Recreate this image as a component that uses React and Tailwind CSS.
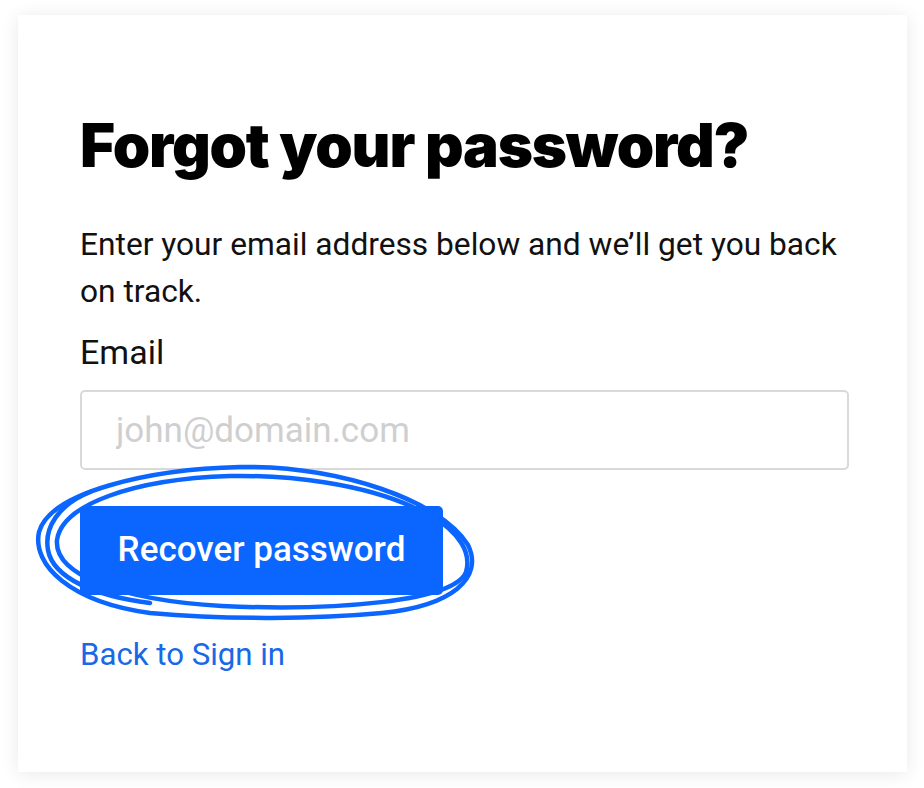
export default function App() {
    return (
        <div className="w-[924px] h-[788px] bg-white pt-[15px] pl-[18px]">
            <div className="w-[889px] h-[757px] bg-white shadow-[0_2px_18px_rgba(0,0,0,0.09)] px-[62px] pt-[100px] font-['Roboto',sans-serif]">
                <h1 className="font-['Inter',sans-serif] font-black text-[60px] leading-[60px] tracking-[-0.02em] text-black">
                    Forgot your password?
                </h1>

                <p className="mt-[46px] text-[31.7px] leading-[47px] text-[#111]">
                    Enter your email address below and we’ll get you back on track.
                </p>

                <form className="mt-[17px]">
                    <label className="block text-[34px] leading-[40px] text-[#111]">Email</label>
                    <input
                        className="mt-[18px] w-[769px] h-[80px] border-2 border-[#d9d9d9] rounded-[5px] px-[34px] text-[35px] outline-none placeholder:text-[#cfcfcf]"
                        placeholder="john@domain.com"
                        type="email"
                    />

                    <div className="relative mt-[36px] w-[363px]">
                        <button
                            type="button"
                            className="relative z-10 w-[363px] h-[89px] bg-[#0a66ff] text-white rounded-[5px] text-[35px] font-medium"
                        >
                            Recover password
                        </button>
                        {/* hand drawn loop around the button */}
                        <svg
                            className="absolute left-[-50px] top-[-46px] z-20 pointer-events-none"
                            width="460"
                            height="170"
                            viewBox="30 460 460 170"
                            fill="none"
                            stroke="#0a66ff"
                            strokeWidth="4.5"
                            strokeLinecap="round"
                        >
                            <path d="M150 613 C70 602 32 565 39 532 C50 492 150 469 240 467 C340 466 440 500 468 545 C484 578 452 606 382 613 C318 619 228 620 150 613" />
                            <path d="M413 507 C362 484 292 475 230 476 C132 479 62 505 57 540 C54 574 118 600 222 606 C332 611 455 602 466 572 C472 552 458 532 432 516" />
                            <path d="M90 492 C58 505 44 528 48 550 C53 578 95 596 150 603" />
                        </svg>
                    </div>
                </form>

                <a href="#" className="block mt-[42px] text-[31.2px] leading-[36px] text-[#1769e6]">
                    Back to Sign in
                </a>
            </div>
        </div>
    );
}
